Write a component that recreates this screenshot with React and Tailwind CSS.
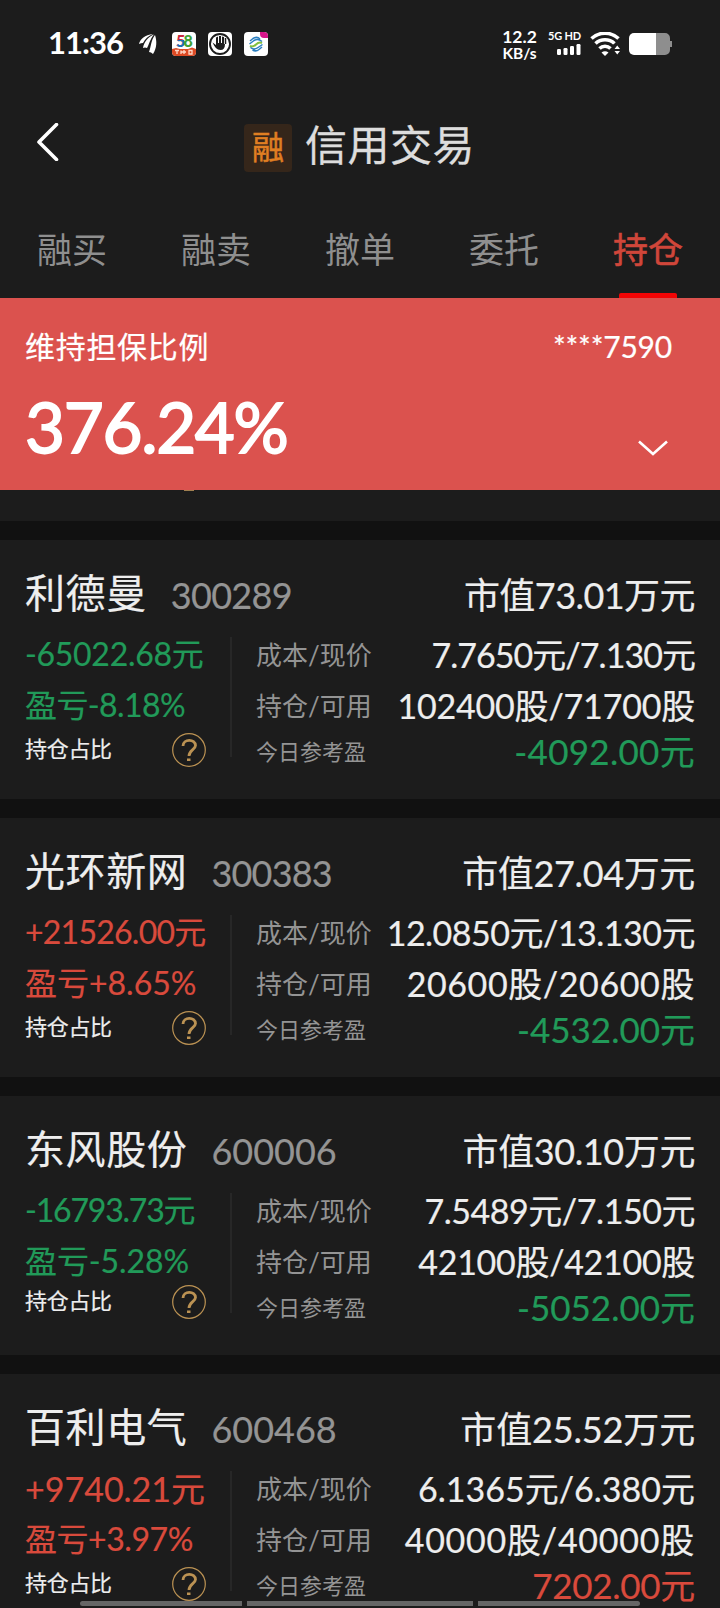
import React from 'react';

const holdings = [
    {
        name: '利德曼', code: '300289', profit: '-65022.68元', ratio: '盈亏-8.18%', up: false,
        marketValue: '市值73.01万元', price: '7.7650元/7.130元', shares: '102400股/71700股', today: '-4092.00元', todayUp: false,
        cls: {
            code: 'tracking-[-0.7px]', profit: 'tracking-[-0.3px]', ratio: 'tracking-[-0.6px]', marketValue: 'tracking-[-0.55px]',
            price: 'tracking-[-0.95px]', shares: 'tracking-[-0.2px]', today: 'tracking-[0.3px]',
        },
    },
    {
        name: '光环新网', code: '300383', profit: '+21526.00元', ratio: '盈亏+8.65%', up: true,
        marketValue: '市值27.04万元', price: '12.0850元/13.130元', shares: '20600股/20600股', today: '-4532.00元', todayUp: false,
        cls: {
            code: 'tracking-[-0.8px]', profit: 'tracking-[-0.75px]', ratio: 'tracking-normal', marketValue: 'tracking-[-0.35px]',
            price: 'tracking-[-0.5px]', shares: 'tracking-[0.6px]', today: 'tracking-normal',
        },
    },
    {
        name: '东风股份', code: '600006', profit: '-16793.73元', ratio: '盈亏-5.28%', up: false,
        marketValue: '市值30.10万元', price: '7.5489元/7.150元', shares: '42100股/42100股', today: '-5052.00元', todayUp: false,
        raised: true,
        cls: {
            code: 'tracking-normal', profit: 'tracking-[-1.2px]', ratio: 'tracking-[-0.1px]', marketValue: 'tracking-[-0.4px]',
            price: 'tracking-[-0.45px]', shares: 'tracking-[-0.3px]', today: 'tracking-normal',
        },
    },
    {
        name: '百利电气', code: '600468', profit: '+9740.21元', ratio: '盈亏+3.97%', up: true,
        marketValue: '市值25.52万元', price: '6.1365元/6.380元', shares: '40000股/40000股', today: '7202.00元', todayUp: true,
        cls: {
            code: 'tracking-normal', profit: 'text-[34px] pt-[1px]', ratio: 'tracking-[-0.45px]', marketValue: 'tracking-[-0.15px]',
            price: 'tracking-normal', shares: 'tracking-[0.75px]', today: 'tracking-[-0.3px]',
        },
    },
];

const tabs = ['融买', '融卖', '撤单', '委托', '持仓'];

const StatusBar = () => (
    <div className="h-[88px] shrink-0 flex items-center pl-[48px] pr-[48px] text-white">
        <span className="w-[80px] -mt-[3px] text-[31px] leading-none font-bold tracking-[-1px]">11:36</span>
        <svg className="ml-[11px]" width="18" height="20" viewBox="0 0 18 20" fill="#fff">
            <path d="M0 10C1 5 6 1 14 0C9 2 6 5 4 9Q2 9 0 10Z" />
            <path d="M4 14C5 8 9 3 15 0.500C11 5 10 11 8 14Q6 13 4 14Z" />
            <path d="M10 18C12 13 12 6 16 1C18 7 18 14 14 20Q12 18 10 18Z" />
        </svg>
        <svg className="ml-[15px]" width="24" height="24" viewBox="0 0 24 24">
            <rect width="24" height="24" rx="4" fill="#fff" />
            <text x="4" y="14.500" fontSize="16" fontWeight="900" fontFamily="Lato" fill="#c8283c">5</text>
            <text x="4" y="14.500" fontSize="16" fontWeight="900" fontFamily="Lato" fill="#1b74b8" clipPath="inset(50% 0 0 0)">5</text>
            <text x="11.500" y="14.500" fontSize="16" fontWeight="900" fontFamily="Lato" fill="#43a335">8</text>
            <path d="M0 17L4 16L8 17L16 17L20 15.500L24 17V20A4 4 0 0 1 20 24H4A4 4 0 0 1 0 20Z" fill="#dc4a24" />
            <path d="M3 18.500H7M5 18.500V22M9 18.500V22M12 18V22M9 20H14M17 18.500H20V22H17Z" stroke="#ffd9c8" strokeWidth="1.300" fill="none" />
        </svg>
        <svg className="ml-[12px]" width="24" height="24" viewBox="0 0 24 24">
            <rect width="24" height="24" rx="4" fill="#fff" />
            <circle cx="12" cy="12" r="10" fill="none" stroke="#1c1c1c" strokeWidth="1.900" />
            <path d="M4.500 10.500L8 13V5.500L10 4.500V11H11V4H13V11H14V4.500L16 5V12L17 12C17 16 15.500 18 12.500 18C9 18 6.500 15 4.500 10.500Z" fill="#1c1c1c" />
            <path d="M17.500 6V12" stroke="#1c1c1c" strokeWidth="1.500" />
        </svg>
        <svg className="ml-[12px]" width="24" height="24" viewBox="0 0 24 24">
            <rect width="24" height="24" rx="4" fill="#fff" />
            <path d="M16 0H20A4 4 0 0 1 24 4V6H20A4 4 0 0 1 16 2Z" fill="#d6158a" />
            <g fill="none" strokeWidth="1.500">
                <path d="M6 9L9 6.500Q13 4 16 7M5.500 12L10 8.500Q14 6 18 9.500" stroke="#2b7fc0" />
                <path d="M6 14Q9 15.500 12 12.500Q15 9.500 18 11" stroke="#83bf3f" strokeWidth="2" />
                <path d="M6.500 15.500Q10 18.500 14 15.500L18.500 12.500M8.500 18Q12 20 15 17.500L18 15" stroke="#2b7fc0" />
            </g>
        </svg>
        <div className="ml-auto w-[35px] mt-[1px] text-[17.500px] leading-[17px] font-bold text-center">
            <div>12.2</div>
            <div className="text-[15.500px]">KB/s</div>
        </div>
        <div className="ml-[11px] w-[33px] -mt-[3px] flex flex-col items-end gap-[3px]">
            <span className="text-[11px] leading-[11px] font-bold whitespace-nowrap tracking-[-0.2px]">5G HD</span>
            <svg width="24" height="11" viewBox="0 0 24 11" fill="#fff">
                <rect x="0" y="5" width="4" height="6" rx="1.200" />
                <rect x="6.500" y="4" width="4" height="7" rx="1.200" />
                <rect x="13" y="2" width="4" height="9" rx="1.200" />
                <rect x="19.500" y="0" width="4" height="11" rx="1.200" />
            </svg>
        </div>
        <svg className="ml-[9px]" width="30" height="24" viewBox="0 0 30 24">
            <g fill="none" stroke="#fff" strokeWidth="3.600">
                <path d="M1.500 6.500A20 20 0 0 1 28.500 6.500" />
                <path d="M5.500 11.500A14 14 0 0 1 24.500 11.500" />
                <path d="M9.500 16.500A8 8 0 0 1 20.500 16.500" />
            </g>
            <path d="M11.500 20.500Q15 18 18.500 20.500L15 24Z" fill="#fff" />
            <path d="M23.500 12H30V24H23.500Z" fill="#1c1c1c" />
            <path d="M24.500 17L27.250 13.500L30 17ZM24.500 19L27.250 22.500L30 19Z" fill="#fff" />
        </svg>
        <svg className="ml-[9px]" width="43" height="22" viewBox="0 0 43 22">
            <path d="M27 0H36A5 5 0 0 1 41 5V8H43V14H41V17A5 5 0 0 1 36 22H27Z" fill="#8e8e8e" />
            <path d="M5 0H27V22H5A5 5 0 0 1 0 17V5A5 5 0 0 1 5 0Z" fill="#fff" />
        </svg>
    </div>
);

const HelpIcon = () => (
    <svg width="34" height="34" viewBox="0 0 34 34" fill="none" stroke="#bb9253">
        <circle cx="17" cy="17" r="16.300" strokeWidth="1.200" />
        <path d="M11 13C11 5.500 23.500 5.500 23.500 12.500C23.500 16.500 17 17 17 23" strokeWidth="2.800" />
        <path d="M15 25.500H18.500V28H15Z" fill="#bb9253" stroke="none" />
    </svg>
);

const HoldingCard = ({ item }) => (
    <div className="h-[259px] shrink-0 bg-[#1c1c1c] px-[25px] pt-[29px] [-webkit-text-stroke:0.2px]">
        <div className="flex items-center h-[48px]">
            <span className="text-[40px] leading-[48px] tracking-[0.6px]">{item.name}</span>
            <span className={`ml-[24px] mt-[3px] text-[36px] leading-[48px] text-[#949494] ${item.cls.code}`}>{item.code}</span>
            <span className={`ml-auto mt-[3px] text-[36px] leading-[48px] ${item.cls.marketValue}`}>{item.marketValue}</span>
        </div>
        <div className="flex mt-[13px]">
            <div className={`w-[205px] shrink-0 whitespace-nowrap text-[32px] ${item.up ? 'text-[#d94a3c]' : 'text-[#219a59]'}`}>
                <div className={`h-[51px] leading-[48px] ${item.cls.profit}`}>{item.profit}</div>
                <div className={`h-[51px] leading-[48px] ${item.cls.ratio}`}>{item.ratio}</div>
                <div className={`flex items-center justify-between w-[181px] h-[34px] ${item.raised ? '-mt-[3px]' : 'mt-[1px]'}`}>
                    <span className="-mt-[4px] text-[22px] tracking-[-0.3px] text-[#eee]">持仓占比</span>
                    <HelpIcon />
                </div>
            </div>
            <div className="w-[2px] shrink-0 h-[120px] mt-[7px] bg-[#272727]" />
            <div className="ml-[24px] shrink-0 text-[#949494] whitespace-nowrap [-webkit-text-stroke:0]">
                <div className="h-[51px] leading-[51px] text-[26px]">成本/现价</div>
                <div className="h-[51px] leading-[51px] text-[26px]">持仓/可用</div>
                <div className="h-[40px] leading-[40px] text-[22px]">今日参考盈</div>
            </div>
            <div className="flex-1 min-w-0 flex flex-col items-end text-[34px] whitespace-nowrap">
                <div className={`h-[51px] leading-[49px] ${item.cls.price}`}>{item.price}</div>
                <div className={`h-[51px] leading-[49px] ${item.cls.shares}`}>{item.shares}</div>
                <div className={`h-[40px] leading-[38px] text-[35px] ${item.cls.today} ${item.todayUp ? 'text-[#d94a3c]' : 'text-[#219a59]'}`}>{item.today}</div>
            </div>
        </div>
    </div>
);

const App = () => (
    <div className="w-[720px] h-[1608px] overflow-hidden flex flex-col bg-[#1c1c1c] text-[#eee] font-[Lato,'Noto_Sans_CJK_SC',sans-serif]">
        <StatusBar />

        <header className="h-[112px] shrink-0 flex items-center pl-[36px]">
            <svg width="23" height="38" viewBox="0 0 23 38" fill="none" stroke="#fff" strokeWidth="3.600" className="-mt-[4px]">
                <path d="M20.500 1.500L3 19L20.500 36.500" strokeLinejoin="round" strokeLinecap="round" />
            </svg>
            <div className="ml-[185px] mt-[7px] w-[48px] h-[48px] rounded-[4px] bg-[#35261a] text-[#e07f22] text-[32px] leading-[45px] text-center [-webkit-text-stroke:0.5px]">融</div>
            <h1 className="ml-[13px] mt-[3px] text-[42px] tracking-[0.5px] text-[#ddd] [-webkit-text-stroke:0.3px]">信用交易</h1>
        </header>

        <nav className="h-[98px] shrink-0 grid grid-cols-5">
            {tabs.map((tab, i) => (
                <div key={tab} className={`flex flex-col items-center justify-between text-[35px] ${i === 4 ? 'text-[#d0463a] [-webkit-text-stroke:0.6px]' : 'text-[#8f8f8f]'}`}>
                    <span className="mt-[24px] leading-[50px]">{tab}</span>
                    {i === 4 && <span className="w-[58px] h-[5px] rounded-t-[2px] bg-[#f20505]" />}
                </div>
            ))}
        </nav>

        <section className="h-[192px] shrink-0 bg-[#db524e] text-white pl-[25px] pr-[48px] pt-[26px]">
            <div className="flex justify-between text-[30px] leading-[44px] [-webkit-text-stroke:0.2px]">
                <span className="tracking-[0.7px]">维持担保比例</span>
                <span className="tracking-[-0.2px]">****7590</span>
            </div>
            <div className="flex justify-between">
                <span className="mt-[19px] text-[69px] leading-[80px] tracking-[-1.3px] [-webkit-text-stroke:1.8px]">376.24%</span>
                <svg className="mt-[72px] mr-[4px]" width="30" height="16" viewBox="0 0 30 16" fill="none" stroke="#fff" strokeWidth="2.600">
                    <path d="M1 1.500L15 14L29 1.500" />
                </svg>
            </div>
        </section>

        {/* tail of the card scrolled under the banner */}
        <div className="h-[31px] shrink-0 pl-[184px]">
            <div className="w-[10px] h-px bg-[#a08050]" />
        </div>

        <main className="relative flex-1 min-h-0 overflow-hidden bg-[#111] pt-[19px] flex flex-col gap-[19px]">
            {holdings.map((item) => (
                <HoldingCard key={item.code} item={item} />
            ))}
            <div className="absolute left-[80px] bottom-[2px] w-[560px] h-[5px] flex gap-[5px]">
                <div className="w-[162px] rounded-l-full bg-[#666]" />
                <div className="w-[226px] bg-[#666]" />
                <div className="flex-1 rounded-r-full bg-[#666]" />
            </div>
        </main>
    </div>
);

export default App;
